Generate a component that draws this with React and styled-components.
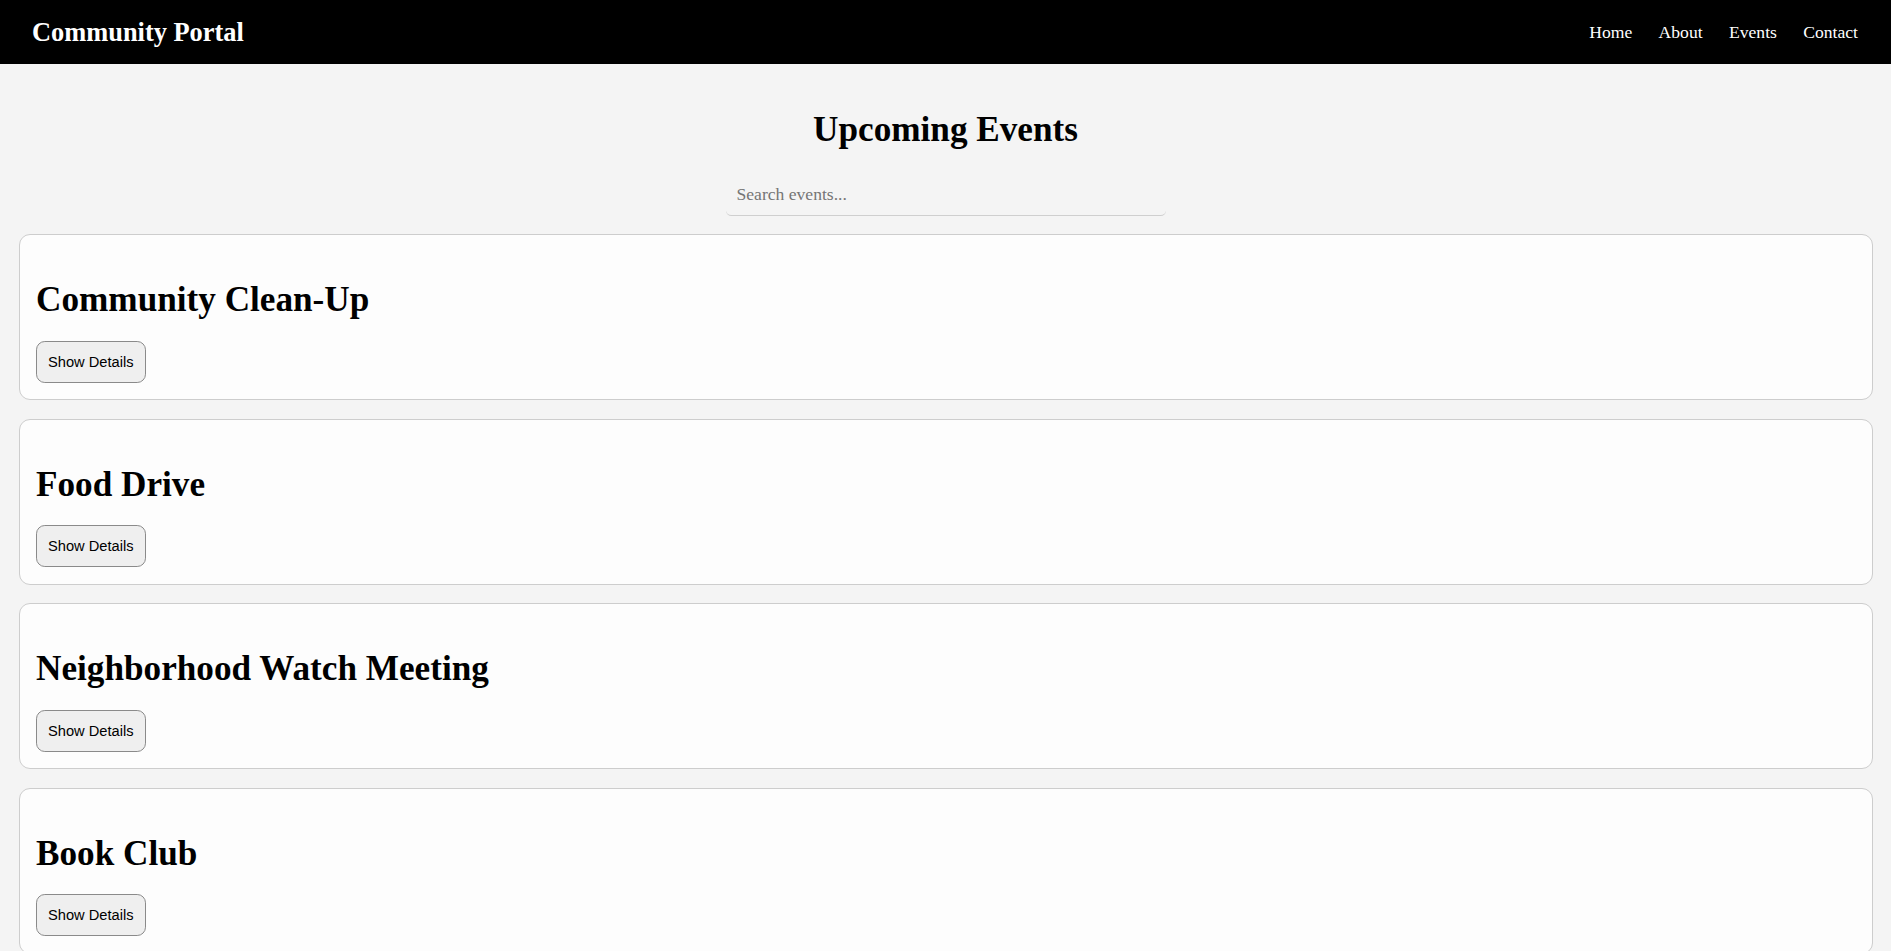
import React, { useState } from 'react';
import styled, { createGlobalStyle } from 'styled-components';

const GlobalStyle = createGlobalStyle`
  body {
    margin: 0;
    background: #f4f4f4;
    font-family: "Liberation Serif", "Times New Roman", serif;
    color: #000;
  }
`;

const events = [
  { id: 1, title: 'Community Clean-Up', details: 'Join us at the park to help clean up the neighborhood.' },
  { id: 2, title: 'Food Drive', details: 'Donate non-perishable food items at the community center.' },
  { id: 3, title: 'Neighborhood Watch Meeting', details: 'Discuss safety plans with your neighbors.' },
  { id: 4, title: 'Book Club', details: 'Monthly meeting at the library.' },
];

const EventCard = ({ event }) => {
  const [open, setOpen] = useState(false);
  return (
    <Card>
      <EventTitle>{event.title}</EventTitle>
      {open && <Details>{event.details}</Details>}
      <Button onClick={() => setOpen(!open)}>
        {open ? 'Hide Details' : 'Show Details'}
      </Button>
    </Card>
  );
};

const App = () => {
  const [query, setQuery] = useState('');
  const shown = events.filter((e) =>
    e.title.toLowerCase().includes(query.toLowerCase())
  );

  return (
    <>
      <GlobalStyle />
      <Header>
        <Logo>Community Portal</Logo>
        <Nav>
          <NavLink href="#">Home</NavLink>
          <NavLink href="#">About</NavLink>
          <NavLink href="#">Events</NavLink>
          <NavLink href="#">Contact</NavLink>
        </Nav>
      </Header>
      <Main>
        <PageTitle>Upcoming Events</PageTitle>
        <Search
          type="text"
          placeholder="Search events..."
          value={query}
          onChange={(e) => setQuery(e.target.value)}
        />
        {shown.map((event) => (
          <EventCard key={event.id} event={event} />
        ))}
      </Main>
    </>
  );
};

export default App;

const Header = styled.header`
  display: flex;
  justify-content: space-between;
  align-items: center;
  height: 64px;
  box-sizing: border-box;
  padding: 0 33px 0 32px;
  background: #000;
  color: #fff;
`;

const Logo = styled.div`
  font-size: 26.4px;
  font-weight: bold;
`;

const Nav = styled.nav`
  display: flex;
  gap: 26.4px;
`;

const NavLink = styled.a`
  color: #fff;
  text-decoration: none;
  font-size: 17.6px;
`;

const Main = styled.main`
  display: flex;
  flex-direction: column;
  padding: 22px 18.5px 0;
`;

const PageTitle = styled.h1`
  font-size: 35.2px;
  text-align: center;
  margin: 23.6px 0;
`;

const Search = styled.input`
  align-self: center;
  width: 440px;
  box-sizing: border-box;
  padding: 10.5px 11px;
  margin-bottom: 18px;
  font-family: "Liberation Serif", "Times New Roman", serif;
  font-size: 17.6px;
  background: transparent;
  border: none;
  border-bottom: 1px solid #cfcfcf;
  border-radius: 5.5px;
  outline: none;

  &::placeholder {
    color: #757575;
  }
`;

const Card = styled.div`
  background: #fdfdfd;
  border: 1px solid #cdcdcd;
  border-radius: 11px;
  padding: 16.5px;
  margin-bottom: 18.5px;
`;

const EventTitle = styled.h2`
  font-size: 35.2px;
  line-height: 1.15;
  margin: 28.5px 0 20px;
`;

const Details = styled.p`
  font-size: 17.6px;
  margin: 0 0 16px;
`;

const Button = styled.button`
  font-family: "Liberation Sans", Arial, sans-serif;
  font-size: 14.67px;
  padding: 12px 11px;
  background: #efefef;
  color: #000;
  border: 1px solid #8a8a8a;
  border-radius: 8.8px;
  cursor: pointer;
`;
